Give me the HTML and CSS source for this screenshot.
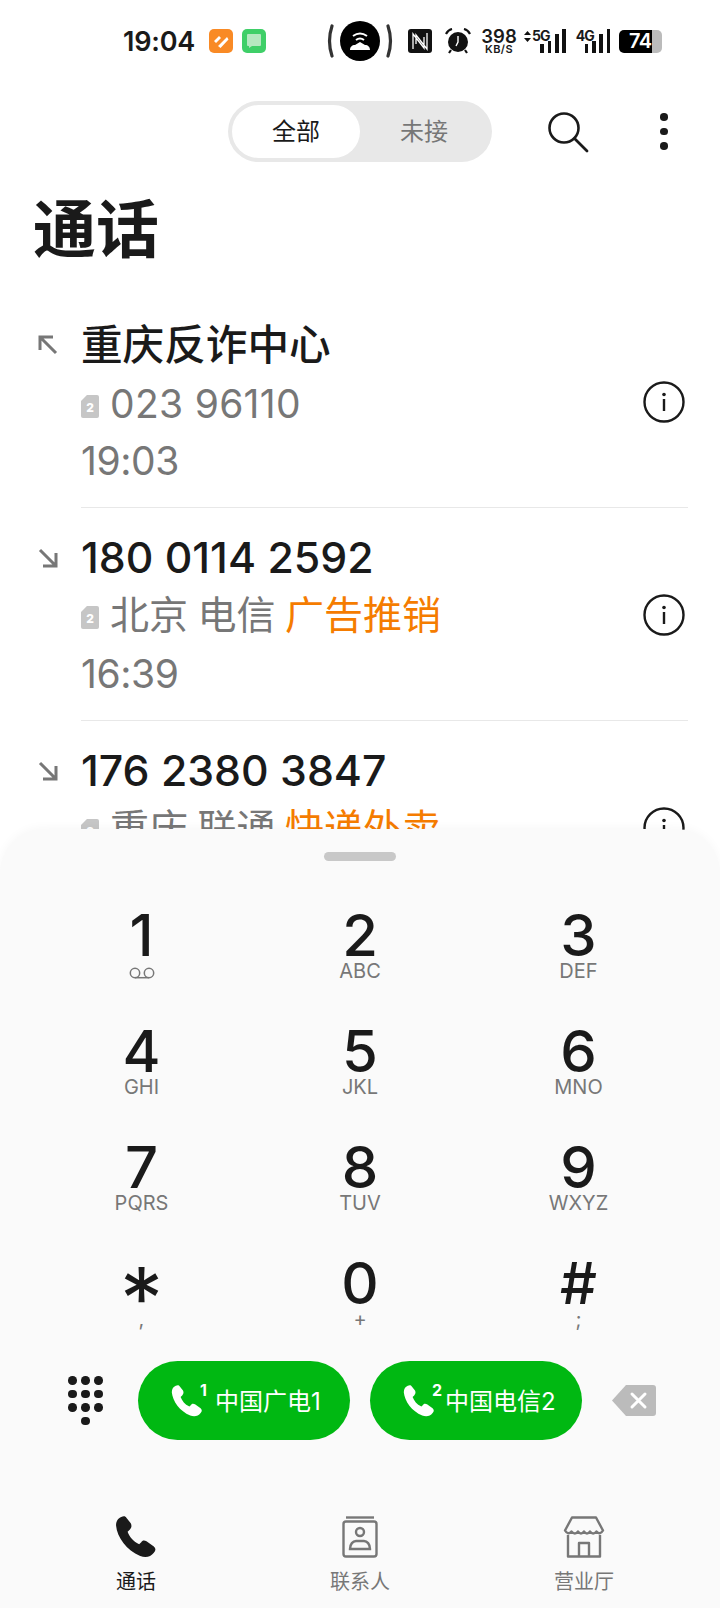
FILE: index.html
```html
<!DOCTYPE html>
<html>
<head>
<meta charset="UTF-8" />
<title>通话</title>
<link rel="stylesheet" href="styles.css">
</head>
<body>
<svg class="defs" width="0" height="0">
	<symbol id="handset" viewBox="0 0 40 40"><path d="M6 1C3 2 1 5 1 9c1 11 10 24 23 29 5 2 10 1 13-3 2-2 2-4 0-6l-7-5c-2-1-4-1-5 1l-2 2c-6-3-9-7-11-12l2-2c2-2 2-4 1-6l-4-5C10 0 8 0 6 1z"/></symbol>
	<symbol id="info" viewBox="0 0 42 42"><circle cx="21" cy="21" r="19.5" fill="none" stroke="#1a1a1a" stroke-width="2.4"/><circle cx="21" cy="13.5" r="1.8" fill="#1a1a1a"/><rect x="19.8" y="18" width="2.4" height="12" fill="#1a1a1a"/></symbol>
	<symbol id="arrow-in" viewBox="0 0 20 20"><path d="M2 2l15 15M18 5v13H5" fill="none" stroke="#777" stroke-width="3"/></symbol>
	<symbol id="arrow-out" viewBox="0 0 20 20"><path d="M18 18L3 3M2 15V2h13" fill="none" stroke="#777" stroke-width="3"/></symbol>
</svg>

<div id="status">
	<span class="clock">19:04</span>
	<svg class="app" width="24" height="24" viewBox="0 0 24 24"><rect width="24" height="24" rx="5" fill="#f98a25"/><path d="M5 12l5-5 2 2-5 5zM9 17l9-9 1.5 2.5L11.500 19z" fill="#fff"/></svg>
	<svg class="app green" width="24" height="24" viewBox="0 0 24 24"><rect width="24" height="24" rx="5" fill="#3fcf68"/><path d="M6 5h12a1 1 0 0 1 1 1v10a1 1 0 0 1-1 1h-8l-3 2v-2H6a1 1 0 0 1-1-1V6a1 1 0 0 1 1-1z" fill="#b5e8c0"/></svg>
	<svg class="hotspot" width="66" height="40" viewBox="0 0 66 40"><path d="M5 5Q0 20 5 35M61 5q5 15 0 30" fill="none" stroke="#333" stroke-width="3.200" stroke-linecap="round"/><circle cx="33" cy="20" r="20" fill="#000"/><path d="M23 29c0-3 2-5 5-5l5-3 5 3c3 0 5 2 5 5z" fill="#fff"/><path d="M26 15q7-5 14 0M29 19q4-3 8 0" fill="none" stroke="#fff" stroke-width="2"/></svg>
	<svg class="nfc" width="24" height="24" viewBox="0 0 24 24"><rect width="24" height="24" rx="3" fill="#111"/><path d="M5 20V5l11 14V8M19 4v16L8 6v9" fill="none" stroke="#fff" stroke-width="1.300"/></svg>
	<svg class="alarm" width="26" height="26" viewBox="0 0 26 26"><circle cx="13" cy="14" r="10" fill="#111"/><path d="M1 6q2-4 6-5M25 6q-2-4-6-5M6 22l-2 3M20 22l2 3" fill="none" stroke="#111" stroke-width="2.200"/><path d="M13 8v6l-2 4" fill="none" stroke="#fff" stroke-width="1.400"/></svg>
	<div class="speed"><b>398</b><small>KB/S</small></div>
	<div class="signal first">
		<span class="net"><svg width="7" height="11" viewBox="0 0 7 11"><path d="M3.500 0L7 4H0zM3.500 11L0 7h7z" fill="#111"/></svg>5G</span>
		<span class="bars"><s></s><s></s><s></s><s></s></span>
	</div>
	<div class="signal">
		<span class="net">4G</span>
		<span class="bars"><s></s><s></s><s></s><s></s></span>
	</div>
	<div class="battery"><span>74</span></div>
</div>

<div id="toolbar">
	<div class="tabs">
		<div class="tab on">全部</div>
		<div class="tab">未接</div>
	</div>
	<svg class="search" width="42" height="42" viewBox="0 0 42 42"><circle cx="17" cy="17" r="14.500" fill="none" stroke="#1a1a1a" stroke-width="2.600"/><path d="M27.500 27.500L40 40" stroke="#1a1a1a" stroke-width="2.800" stroke-linecap="round"/></svg>
	<div class="more"><i></i><i></i><i></i></div>
</div>

<h1>通话</h1>

<div id="calls">
	<div class="call">
		<svg class="dir" width="20" height="20"><use href="#arrow-out"/></svg>
		<div class="body">
			<div class="name">重庆反诈中心</div>
			<div class="sub"><span class="sim">2</span><span class="tel">023 96110</span></div>
			<div class="time">19:03</div>
		</div>
		<svg class="info" width="42" height="42"><use href="#info"/></svg>
	</div>
	<div class="call">
		<svg class="dir" width="20" height="20"><use href="#arrow-in"/></svg>
		<div class="body">
			<div class="name num">180 0114 2592</div>
			<div class="sub place"><span class="sim">2</span>北京 电信 <em>广告推销</em></div>
			<div class="time">16:39</div>
		</div>
		<svg class="info" width="42" height="42"><use href="#info"/></svg>
	</div>
	<div class="call">
		<svg class="dir" width="20" height="20"><use href="#arrow-in"/></svg>
		<div class="body">
			<div class="name num">176 2380 3847</div>
			<div class="sub place"><span class="sim">2</span>重庆 联通 <em>快递外卖</em></div>
		</div>
		<svg class="info" width="42" height="42"><use href="#info"/></svg>
	</div>
</div>

<div id="sheet">
	<div class="handle"></div>
	<div class="keypad">
		<div class="key"><b>1</b><span><svg width="26" height="12" viewBox="0 0 26 12"><circle cx="6" cy="6" r="4.700" fill="none" stroke="#777" stroke-width="1.500"/><circle cx="20" cy="6" r="4.700" fill="none" stroke="#777" stroke-width="1.500"/><path d="M6 10.700h14" stroke="#777" stroke-width="1.500"/></svg></span></div>
		<div class="key"><b>2</b><span>ABC</span></div>
		<div class="key"><b>3</b><span>DEF</span></div>
		<div class="key"><b>4</b><span>GHI</span></div>
		<div class="key"><b>5</b><span>JKL</span></div>
		<div class="key"><b>6</b><span>MNO</span></div>
		<div class="key"><b>7</b><span>PQRS</span></div>
		<div class="key"><b>8</b><span>TUV</span></div>
		<div class="key"><b>9</b><span>WXYZ</span></div>
		<div class="key"><b class="star">*</b><span>,</span></div>
		<div class="key"><b>0</b><span>+</span></div>
		<div class="key"><b>#</b><span>;</span></div>
	</div>
	<div class="actions">
		<div class="dots"><i></i><i></i><i></i><i></i><i></i><i></i><i></i><i></i><i></i><i class="last"></i></div>
		<div class="dial">
			<svg class="ph" width="32" height="34"><use href="#handset"/></svg><sup>1</sup>
			<span>中国广电1</span>
		</div>
		<div class="dial">
			<svg class="ph" width="32" height="34"><use href="#handset"/></svg><sup>2</sup>
			<span>中国电信2</span>
		</div>
		<svg class="back" width="44" height="31" viewBox="0 0 44 31"><path d="M14 0h27a3 3 0 0 1 3 3v25a3 3 0 0 1-3 3H14L0 15.500z" fill="#bbb"/><path d="M20 9l13 13M33 9L20 22" stroke="#fff" stroke-width="3" stroke-linecap="round"/></svg>
	</div>
	<div class="nav">
		<div class="item on">
			<svg width="42" height="42"><use href="#handset"/></svg>
			<span>通话</span>
		</div>
		<div class="item">
			<svg width="36" height="42" viewBox="0 0 36 42" fill="none" stroke="#777" stroke-width="2.400"><path d="M4 1.500h28"/><rect x="1.500" y="5.500" width="33" height="35" rx="2.500"/><circle cx="18" cy="16" r="4"/><path d="M8 33c0-5 3-8 6-8h8c3 0 6 3 6 8z"/></svg>
			<span>联系人</span>
		</div>
		<div class="item">
			<svg width="42" height="42" viewBox="0 0 42 42" fill="none" stroke="#777" stroke-width="2.400" stroke-linejoin="round"><path d="M9 1.500h24l7 13q-3 5-6.500 1-3.500 4-6.500 0-3 4-6 0-3 4-6 0-3 4-6.500 0-3.500 4-6.500-1z"/><path d="M5 19v21.500h32V19M16 40V27h10v13"/></svg>
			<span>营业厅</span>
		</div>
	</div>
</div>
</body>
</html>
```

FILE: styles.css
```css
html,body{margin:0;padding:0;}
body{position:relative;width:720px;height:1608px;overflow:hidden;background:#fff;color:#1a1a1a;font-family:Inter,"Noto Sans CJK SC",sans-serif;}
.defs{display:block;height:0;}

#status{display:flex;align-items:center;height:82px;padding-left:123px;box-sizing:border-box;}
#status svg{flex:none;}
.clock{width:86px;font-size:27px;font-weight:600;letter-spacing:-.2px;white-space:nowrap;}
.app.green{margin-left:9px;}
.hotspot{margin-left:61px;}
.nfc{margin-left:15px;}
.alarm{margin-left:13px;}
.speed{display:flex;flex-direction:column;align-items:center;width:34px;margin-left:11px;line-height:1;}
.speed b{font-size:18.500px;font-weight:600;height:16px;}
.speed small{font-size:11px;font-weight:600;margin-top:1px;letter-spacing:.4px;}
.signal{display:flex;align-items:flex-end;height:24px;margin-left:10px;}
.signal.first{margin-left:8px;}
.net{display:flex;align-items:center;gap:1px;font-size:14px;font-weight:700;line-height:14px;align-self:flex-start;letter-spacing:-1px;white-space:nowrap;}
.bars{display:flex;align-items:flex-end;gap:3.800px;margin-left:-9px;}
.bars s{display:block;width:3.500px;background:#111;text-decoration:none;height:9px;}
.bars s:nth-child(2){height:12px;}
.bars s:nth-child(3){height:19px;}
.bars s:nth-child(4){height:24px;}
.battery{width:43px;height:23px;margin-left:9px;border-radius:5px;background:linear-gradient(90deg,#000 77%,#bbb 77%);color:#fff;font-size:20px;font-weight:600;line-height:23px;text-align:center;letter-spacing:-.6px;}
.battery span{display:block;width:34px;margin-left:4px;}

#toolbar{display:flex;align-items:center;height:61px;margin-top:19px;padding-left:228px;}
.tabs{display:flex;width:264px;height:61px;padding:4px;box-sizing:border-box;border-radius:31px;background:#e8e8e8;}
.tab{width:128px;height:53px;border-radius:27px;font-size:24px;line-height:53px;text-align:center;color:#777;}
.tab.on{background:#fff;color:#1a1a1a;}
.search{margin-left:55px;}
.more{display:flex;flex-direction:column;gap:7px;margin-left:71px;}
.more i{display:block;width:7.500px;height:7.500px;border-radius:50%;background:#1a1a1a;}

h1{margin:27px 0 0 33px;font-size:63px;font-weight:700;line-height:80px;}

#calls{margin-top:26px;}
.call{display:flex;height:213px;box-sizing:border-box;}
.dir{flex:none;margin:40px 0 0 38px;}
.body{width:607px;height:213px;box-sizing:border-box;margin-left:23px;border-bottom:1px solid #e8e8e8;}
.call:last-child .body{border-bottom:0;}
.name{height:80px;padding-top:22px;box-sizing:border-box;font-size:41.600px;font-weight:500;line-height:56px;}
.name.num{font-size:42.800px;}
.sub,.time{height:57px;font-size:39px;line-height:57px;color:#777;}
.sub.place{line-height:53px;word-spacing:-1.500px;}
.time{letter-spacing:-.4px;}
.tel{letter-spacing:.3px;}
.sim{display:inline-block;width:18px;height:23px;margin-right:11px;vertical-align:6px;background:#c6c6c6;border-radius:2px;clip-path:polygon(33% 0,100% 0,100% 100%,0 100%,0 26%);color:#fff;font-size:12px;font-weight:800;line-height:25px;text-align:center;}
.sub em{font-style:normal;color:#f57c00;}
.info{flex:none;margin:86px 0 0 -45px;}

#sheet{position:absolute;left:0;right:0;top:829px;bottom:0;border-radius:44px 44px 0 0;background:#fafafa;box-shadow:0 -2px 10px rgba(0,0,0,.03);}
.handle{width:72px;height:9px;margin:23px auto 0;border-radius:5px;background:#c8c8c8;}
.keypad{display:grid;grid-template-columns:repeat(3,218.500px);grid-auto-rows:116px;justify-content:center;margin-top:40px;}
.key{display:flex;flex-direction:column;align-items:center;}
.key b{height:56px;margin-top:6px;font-size:58px;font-weight:500;line-height:56px;}
.key b.star{height:30px;margin-top:0;padding-top:32px;font-size:86px;font-weight:400;line-height:36px;}
.key span{height:16px;font-size:20px;line-height:16px;color:#777;}
.key svg{display:block;margin-top:4px;}
.actions{display:flex;align-items:center;height:79px;margin-top:-4px;}
.dots{display:grid;grid-template-columns:repeat(3,8px);gap:5px;margin-left:68px;}
.dots i{display:block;width:8.500px;height:8.500px;border-radius:50%;background:#1a1a1a;}
.dots i.last{grid-column:2;}
.dial{display:flex;align-items:center;width:212px;height:79px;padding-left:33px;box-sizing:border-box;border-radius:40px;background:#00b812;color:#fff;}
.dots + .dial{margin-left:36px;}
.dial + .dial{margin-left:20px;}
.ph{fill:#fff;flex:none;}
.dial sup{width:12px;margin:-22px 0 0 -3px;font-size:16px;font-weight:700;line-height:1;}
.dial span{margin:0 0 3px 3px;font-size:24px;}
.dial + .dial span{margin-left:1px;}
.back{margin-left:30px;}
.nav{display:flex;justify-content:center;margin-top:76px;}
.item{display:flex;flex-direction:column;align-items:center;width:224px;color:#777;font-size:20px;}
.item svg{display:block;height:42px;}
.item span{margin-top:10px;line-height:28px;}
.item.on{color:#1a1a1a;fill:#1a1a1a;}
```
